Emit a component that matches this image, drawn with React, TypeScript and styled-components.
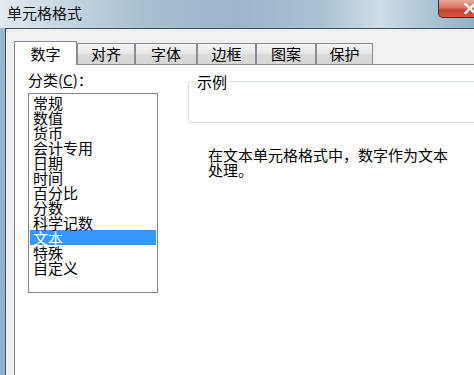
import React from "react";
import styled, { createGlobalStyle } from "styled-components";

const GlobalStyle = createGlobalStyle`
  html, body {
    margin: 0;
    padding: 0;
    background: #ffffff;
  }
  body {
    font-family: "Noto Sans CJK SC", "Noto Sans", sans-serif;
  }
`;

const tabs = [
  { label: "数字", width: 63 },
  { label: "对齐", width: 58 },
  { label: "字体", width: 62 },
  { label: "边框", width: 59 },
  { label: "图案", width: 60 },
  { label: "保护", width: 57 },
];

const categories = [
  "常规",
  "数值",
  "货币",
  "会计专用",
  "日期",
  "时间",
  "百分比",
  "分数",
  "科学记数",
  "文本",
  "特殊",
  "自定义",
];

function App() {
  const [activeTab, setActiveTab] = React.useState("数字");
  const [selected, setSelected] = React.useState("文本");

  return (
    <>
      <GlobalStyle />
      <Window>
        <TitleBar>
          <Title>单元格格式</Title>
          <CloseButton aria-label="关闭">
            <svg width="12" height="11" viewBox="0 0 12 11">
              <path
                d="M1.5 1 L10.5 10 M10.5 1 L1.5 10"
                stroke="#ffffff"
                strokeWidth="2.4"
                strokeLinecap="square"
              />
            </svg>
          </CloseButton>
        </TitleBar>
        <Body>
          <Client>
            <TabStrip>
              {tabs.map((tab) => (
                <Tab
                  key={tab.label}
                  $width={tab.width}
                  $active={activeTab === tab.label}
                  onClick={() => setActiveTab(tab.label)}
                >
                  {tab.label}
                </Tab>
              ))}
            </TabStrip>
            <Panel>
              <LeftColumn>
                <Label>
                  分类(<u>C</u>)：
                </Label>
                <ListBox>
                  {categories.map((item) => (
                    <ListItem
                      key={item}
                      $selected={selected === item}
                      onClick={() => setSelected(item)}
                    >
                      {item}
                    </ListItem>
                  ))}
                </ListBox>
              </LeftColumn>
              <RightColumn>
                <GroupBox>
                  <Legend>示例</Legend>
                  <GroupBody />
                </GroupBox>
                <Description>在文本单元格格式中，数字作为文本处理。</Description>
              </RightColumn>
            </Panel>
          </Client>
        </Body>
      </Window>
    </>
  );
}

const Window = styled.div`
  width: 474px;
  height: 375px;
  overflow: hidden;
  display: flex;
  flex-direction: column;
  background: linear-gradient(180deg, #9ab8cd 0%, #8fb0c8 100%);
  font-family: "Noto Sans CJK SC", "Noto Sans", sans-serif;
`;

const TitleBar = styled.div`
  height: 28px;
  flex-shrink: 0;
  display: flex;
  align-items: flex-start;
  background: linear-gradient(
    90deg,
    #e3eaf0 0%,
    #c9d8e3 12%,
    #a9c0d0 30%,
    #9cb6c8 50%,
    #abc2d2 68%,
    #d0dde6 80%,
    #b4c9d8 88%,
    #93b2c8 100%
  );
`;

const Title = styled.div`
  padding: 3px 0 0 7px;
  font-size: 15px;
  line-height: 20px;
  color: #111111;
`;

const CloseButton = styled.div`
  margin-left: auto;
  margin-right: -24px;
  width: 60px;
  height: 18px;
  box-sizing: border-box;
  flex-shrink: 0;
  display: flex;
  align-items: center;
  padding-left: 25px;
  border: 1px solid #5e271d;
  border-top: none;
  border-radius: 0 0 0 5px;
  background: linear-gradient(180deg, #e8aa9c 0%, #d9725f 45%, #c6412b 60%, #d25a40 100%);
`;

const Body = styled.div`
  flex: 1;
  display: flex;
  padding-left: 5px;
  min-height: 0;
`;

const Client = styled.div`
  flex: none;
  width: 520px;
  display: flex;
  flex-direction: column;
  border-left: 1px solid #3f4d58;
  border-top: 1px solid #3f4d58;
  background: #f0f0f0;
  padding: 12px 0 0 8px;
`;

const TabStrip = styled.div`
  height: 24px;
  box-sizing: border-box;
  flex-shrink: 0;
  display: flex;
  align-items: flex-end;
  border-bottom: 1px solid #898c95;
`;

const Tab = styled.div<{ $width: number; $active?: boolean }>`
  position: relative;
  z-index: ${(p) => (p.$active ? 1 : 0)};
  width: ${(p) => p.$width}px;
  height: ${(p) => (p.$active ? 24 : 21)}px;
  margin-bottom: ${(p) => (p.$active ? -1 : 0)}px;
  box-sizing: border-box;
  display: flex;
  align-items: center;
  justify-content: center;
  padding-bottom: ${(p) => (p.$active ? 0 : 1)}px;
  border: 1px solid #898c95;
  border-bottom: none;
  background: ${(p) =>
    p.$active
      ? "#ffffff"
      : "linear-gradient(180deg, #f4f4f4 0%, #e8e8e8 45%, #dadada 55%, #d6d6d6 100%)"};
  font-size: 15px;
  line-height: 15px;
  color: #000000;
  cursor: default;
`;

const Panel = styled.div`
  flex: 1;
  display: flex;
  gap: 30px;
  background: #ffffff;
  border-left: 1px solid #898c95;
  padding: 7px 0 0 13px;
`;

const LeftColumn = styled.div`
  width: 130px;
  flex-shrink: 0;
  display: flex;
  flex-direction: column;
`;

const Label = styled.div`
  height: 15px;
  font-size: 15px;
  line-height: 15px;
  margin-bottom: 6px;
  color: #000000;
  white-space: nowrap;
`;

const ListBox = styled.div`
  height: 200px;
  box-sizing: border-box;
  border: 1px solid #828790;
  padding: 1px;
  background: #ffffff;
`;

const ListItem = styled.div<{ $selected?: boolean }>`
  height: 15px;
  line-height: 15px;
  font-size: 15px;
  padding-left: 3px;
  white-space: nowrap;
  color: ${(p) => (p.$selected ? "#ffffff" : "#000000")};
  background: ${(p) => (p.$selected ? "#3399ff" : "transparent")};
  cursor: default;
`;

const RightColumn = styled.div`
  width: 300px;
  flex-shrink: 0;
  display: flex;
  flex-direction: column;
  padding-top: 2px;
`;

const GroupBox = styled.fieldset`
  margin: 0;
  padding: 0 7px;
  border: 1px solid #d5dfe5;
  border-radius: 3px;
  min-width: 0;
`;

const Legend = styled.legend`
  padding: 0 1px;
  font-size: 15px;
  line-height: 15px;
  color: #000000;
`;

const GroupBody = styled.div`
  height: 33px;
`;

const Description = styled.div`
  margin-top: 24px;
  padding-left: 20px;
  width: 250px;
  font-size: 15px;
  line-height: 15px;
  color: #000000;
`;

export default App;
